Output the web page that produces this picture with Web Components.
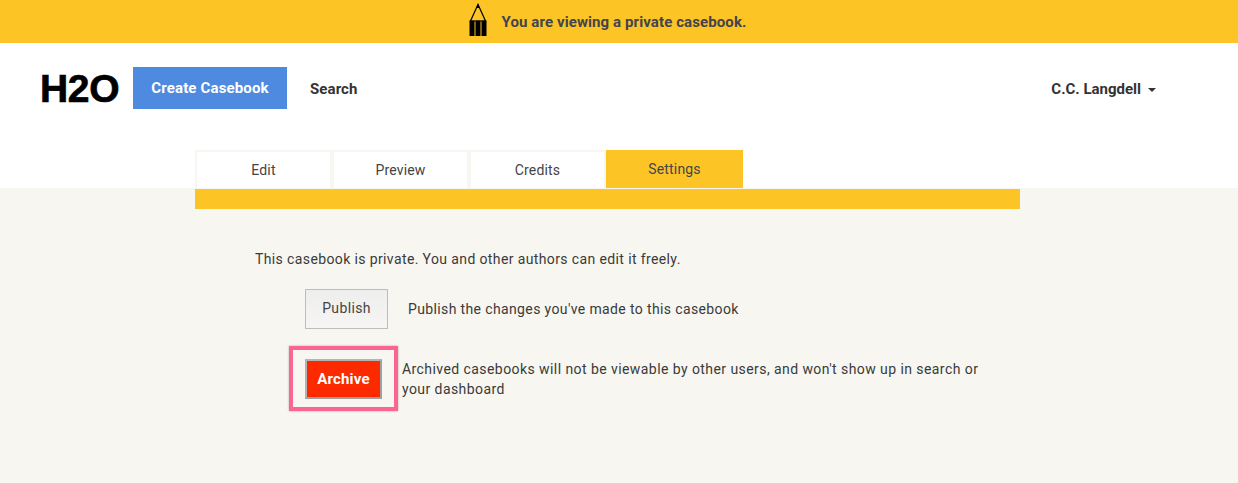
<!DOCTYPE html>
<html lang="en">
<head>
<meta charset="utf-8">
<title>H2O casebook settings</title>
<style>
  html, body { margin: 0; padding: 0; }
  body { font-family: Roboto, "Liberation Sans", sans-serif; color: #333; background: #fff; width: 1238px; height: 483px; overflow: hidden; }
</style>
</head>
<body>
<h2o-banner>You are viewing a private casebook.</h2o-banner>
<h2o-header user="C.C. Langdell"></h2o-header>
<h2o-tabs>
  <h2o-tab>Edit</h2o-tab>
  <h2o-tab>Preview</h2o-tab>
  <h2o-tab>Credits</h2o-tab>
  <h2o-tab active>Settings</h2o-tab>
</h2o-tabs>
<h2o-settings>
  <span slot="intro">This casebook is private. You and other authors can edit it freely.</span>
  <h2o-action label="Publish">Publish the changes you've made to this casebook</h2o-action>
  <h2o-action label="Archive" danger>Archived casebooks will not be viewable by other users, and won't show up in search or your dashboard</h2o-action>
</h2o-settings>
<script>
class H2oBanner extends HTMLElement {
  constructor() {
    super();
    this.attachShadow({ mode: 'open' });
    this.shadowRoot.innerHTML = `
      <style>
        :host { display: flex; align-items: center; justify-content: center; height: 43px; background: #fcc425; padding-right: 23px; box-sizing: border-box; }
        svg { display: block; margin: 0 15px 4px 0; }
        .text { font: 700 15px/20px Roboto, sans-serif; color: #44444c; letter-spacing: .1px; }
      </style>
      <svg width="18" height="33" viewBox="0 0 18 33">
        <path d="M9 1.5 1.5 18h15z" fill="none" stroke="#000" stroke-width="1.2"/>
        <path d="M7.2 5 9 .5 10.8 5z" fill="#000"/>
        <path d="M.5 17.5h5V33h-5zM6.5 17.5h5V33h-5zM12.5 17.5h5V33h-5z" fill="#000"/>
      </svg>
      <span class="text"><slot></slot></span>`;
  }
}
customElements.define('h2o-banner', H2oBanner);

class H2oHeader extends HTMLElement {
  constructor() {
    super();
    this.attachShadow({ mode: 'open' });
  }
  connectedCallback() {
    this.shadowRoot.innerHTML = `
      <style>
        :host { display: flex; align-items: center; height: 92px; padding: 0 82px 0 40px; box-sizing: border-box; background: #fff; }
        .logo { font: 700 39px/42px "Liberation Sans", sans-serif; color: #000; width: 93px; margin-bottom: 1px; letter-spacing: -.3px; -webkit-text-stroke: .7px #000; }
        .create { display: flex; align-items: center; justify-content: center; width: 154px; height: 42px; margin-bottom: 2px; background: #4e8ae0; color: #fff; font: 700 15px/20px Roboto, sans-serif; letter-spacing: .15px; }
        .search { margin-left: 23px; font: 700 15px/20px Roboto, sans-serif; letter-spacing: .1px; color: #333; flex: 1; }
        .user { font: 700 15px/20px Roboto, sans-serif; color: #333; display: flex; align-items: center; }
        .caret { width: 0; height: 0; margin-left: 7px; margin-top: 2px; border: 4px solid transparent; border-top-color: #333; border-bottom: 0; }
      </style>
      <span class="logo">H2O</span>
      <span class="create">Create Casebook</span>
      <span class="search">Search</span>
      <span class="user">${this.getAttribute('user')}<i class="caret"></i></span>`;
  }
}
customElements.define('h2o-header', H2oHeader);

class H2oTabs extends HTMLElement {
  constructor() {
    super();
    this.attachShadow({ mode: 'open' });
    this.shadowRoot.innerHTML = `
      <style>
        :host { display: flex; height: 53px; padding: 15px 0 0 195px; box-sizing: border-box; background: #fff; }
      </style>
      <slot></slot>`;
  }
}
customElements.define('h2o-tabs', H2oTabs);

class H2oTab extends HTMLElement {
  constructor() {
    super();
    this.attachShadow({ mode: 'open' });
    this.shadowRoot.innerHTML = `
      <style>
        :host { display: flex; align-items: center; justify-content: center; width: 137px; height: 38px; box-sizing: border-box; border: 2px solid #f7f6f1; border-bottom: 0; background: #fff; font: 400 14px/20px Roboto, sans-serif; letter-spacing: .15px; color: #444; }
        :host([active]) { background: #fcc425; border: 0; color: #44444c; padding-bottom: 1px; }
      </style>
      <slot></slot>`;
  }
}
customElements.define('h2o-tab', H2oTab);

class H2oSettings extends HTMLElement {
  constructor() {
    super();
    this.attachShadow({ mode: 'open' });
    this.shadowRoot.innerHTML = `
      <style>
        :host { display: block; height: 295px; background: #f7f6f1; box-sizing: border-box; padding-top: 1px; }
        .bar { width: 825px; height: 20px; margin-left: 195px; background: #fcc425; }
        .intro { margin: 40px 0 0 255px; font: 400 14px/20px Roboto, sans-serif; letter-spacing: .38px; color: #3a3a3a; }
        .actions { display: flex; flex-direction: column; margin: 20px 0 0 289px; gap: 17px; }
      </style>
      <div class="bar"></div>
      <div class="intro"><slot name="intro"></slot></div>
      <div class="actions"><slot></slot></div>`;
  }
}
customElements.define('h2o-settings', H2oSettings);

class H2oAction extends HTMLElement {
  constructor() {
    super();
    this.attachShadow({ mode: 'open' });
  }
  connectedCallback() {
    this.shadowRoot.innerHTML = `
      <style>
        :host { display: flex; align-items: center; font: 400 14px/20px Roboto, sans-serif; letter-spacing: .37px; color: #3a3a3a; }
        .ring { padding-left: 16px; }
        button { display: block; width: 83px; height: 40px; padding: 0 0 2px; box-sizing: border-box; border: 1px solid #bdbdbd; background: linear-gradient(#eeeeee, #f6f5f3); font: 400 14px/20px Roboto, sans-serif; letter-spacing: .37px; color: #444; }
        .text { margin-left: 20px; width: 580px; }
        :host([danger]) { letter-spacing: .43px; }
        :host([danger]) .ring { display: flex; align-items: center; justify-content: center; width: 109px; height: 65px; box-sizing: border-box; padding: 0; border: 4px solid #fc6593; box-shadow: 0 0 2px rgba(0,0,0,.3); }
        :host([danger]) button { width: 77px; height: 40px; padding: 0; border: 2px solid; border-color: #b4b4b4 #a0a0a0 #a0a0a0 #b4b4b4; background: #fd2a00; color: #fff; font-size: 15px; font-weight: 700; letter-spacing: .15px; }
        :host([danger]) .text { margin-left: 4px; }
      </style>
      <div class="ring"><button>${this.getAttribute('label')}</button></div>
      <div class="text"><slot></slot></div>`;
  }
}
customElements.define('h2o-action', H2oAction);
</script>
</body>
</html>
